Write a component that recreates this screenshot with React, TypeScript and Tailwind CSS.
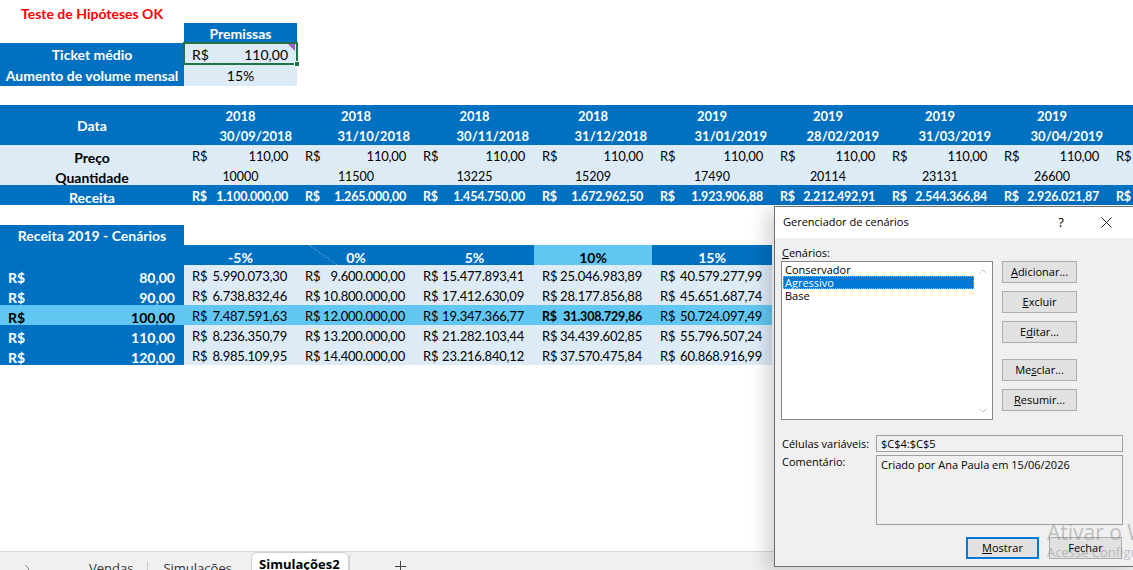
import React from "react";

const COL_W = ["w-[113px]", "w-[118px]", "w-[119px]", "w-[118px]", "w-[120px]", "w-[112px]", "w-[112px]", "w-[112px]", "w-[112px]"];

const years = ["2018", "2018", "2018", "2018", "2019", "2019", "2019", "2019", "2019"];
const dates = ["30/09/2018", "31/10/2018", "30/11/2018", "31/12/2018", "31/01/2019", "28/02/2019", "31/03/2019", "30/04/2019", "31/05/2019"];
const qtd = ["10000", "11500", "13225", "15209", "17490", "20114", "23131", "26600", "30590"];
const receita = ["1.100.000,00", "1.265.000,00", "1.454.750,00", "1.672.962,50", "1.923.906,88", "2.212.492,91", "2.544.366,84", "2.926.021,87", "3.364.925,15"];

const headers = ["-5%", "0%", "5%", "10%", "15%"];
const cenarios = [
  { preco: "80,00", vals: ["5.990.073,30", "9.600.000,00", "15.477.893,41", "25.046.983,89", "40.579.277,99"] },
  { preco: "90,00", vals: ["6.738.832,46", "10.800.000,00", "17.412.630,09", "28.177.856,88", "45.651.687,74"] },
  { preco: "100,00", vals: ["7.487.591,63", "12.000.000,00", "19.347.366,77", "31.308.729,86", "50.724.097,49"], active: true },
  { preco: "110,00", vals: ["8.236.350,79", "13.200.000,00", "21.282.103,44", "34.439.602,85", "55.796.507,24"] },
  { preco: "120,00", vals: ["8.985.109,95", "14.400.000,00", "23.216.840,12", "37.570.475,84", "60.868.916,99"] },
];

// celula contabil: R$ a esquerda, valor a direita
function Money({ value, className = "" }: { value: string; className?: string }) {
  return (
    <div className={`flex h-full items-center justify-between pt-[4px] pl-[8px] pr-[9px] ${className}`}>
      <span>R$</span>
      <span>{value}</span>
    </div>
  );
}

function Btn({ children, w = "w-[75px]", focus = false }: { children: React.ReactNode; w?: string; focus?: boolean }) {
  return (
    <div
      className={`${w} h-[22px] flex items-center justify-center bg-[#e1e1e1] ${
        focus ? "border-2 border-[#0078d7]" : "border border-[#adadad]"
      }`}
    >
      {children}
    </div>
  );
}

function Sheet() {
  return (
    <div className="relative flex-1 overflow-hidden bg-white font-['Lato',sans-serif] text-[13px] text-black">
      {/* titulo */}
      <div className="h-[23px] pl-[21px] pt-[5px] leading-[17px] text-[14px] font-bold text-[#ff0000]">Teste de Hipóteses OK</div>

      {/* premissas */}
      <div className="flex h-[20px]">
        <div className="w-[184px] shrink-0" />
        <div className="w-[113px] shrink-0 bg-[#0070c0] text-white font-bold text-[14px] flex items-center justify-center">Premissas</div>
      </div>
      <div className="flex h-[21px]">
        <div className="w-[184px] shrink-0 bg-[#0070c0] text-white font-bold text-[14px] flex items-center justify-center pt-[1px]">Ticket médio</div>
        <div className="relative w-[113px] shrink-0 bg-[#ddebf7] text-[14px]">
          <div className="flex h-full items-center justify-between pt-[1px] pl-[8px] pr-[9px]">
            <span>R$</span>
            <span>110,00</span>
          </div>
          <div className="absolute -left-[1px] -top-[1px] -right-[1px] -bottom-[1px] border-2 border-[#217346]" />
          <div className="absolute right-[2px] top-[1px] w-0 h-0 border-l-[7px] border-l-transparent border-t-[7px] border-t-[#a259c9]" />
          <div className="absolute -right-[3px] -bottom-[3px] w-[6px] h-[6px] bg-[#217346] border border-white" />
        </div>
      </div>
      <div className="flex h-[22px]">
        <div className="w-[184px] shrink-0 bg-[#0070c0] text-white font-bold text-[14px] flex items-center justify-center">Aumento de volume mensal</div>
        <div className="w-[113px] shrink-0 bg-[#ddebf7] text-[14px] flex items-center justify-center">15%</div>
      </div>
      <div className="h-[19px]" />

      {/* tabela de datas */}
      <div className="flex h-[40px] bg-[#0070c0] text-white font-bold">
        <div className="w-[184px] shrink-0 flex items-center justify-center text-[14px]">Data</div>
        {years.map((y, i) => (
          <div key={i} className={`${COL_W[i]} shrink-0 flex flex-col`}>
            <div className="h-[20px] pt-[4px] flex items-center justify-center">{y}</div>
            <div className="h-[20px] pt-[4px] flex items-center justify-end pr-[5px]">{dates[i]}</div>
          </div>
        ))}
      </div>
      <div className="flex h-[20px] bg-[#ddebf7]">
        <div className="w-[184px] shrink-0 flex items-center justify-center pt-[4px] font-bold text-[14px]">Preço</div>
        {years.map((_, i) => (
          <div key={i} className={`${COL_W[i]} shrink-0 tracking-[-0.2px]`}>
            <Money value="110,00" />
          </div>
        ))}
      </div>
      <div className="flex h-[20px] bg-[#ddebf7]">
        <div className="w-[184px] shrink-0 flex items-center justify-center pt-[4px] font-bold text-[14px]">Quantidade</div>
        {qtd.map((q, i) => (
          <div key={i} className={`${COL_W[i]} shrink-0 flex items-center justify-center pt-[4px] text-[12.5px]`}>
            {q}
          </div>
        ))}
      </div>
      <div className="flex h-[20px] bg-[#0070c0] text-white font-bold">
        <div className="w-[184px] shrink-0 flex items-center justify-center pt-[4px] text-[14px]">Receita</div>
        {receita.map((r, i) => (
          <div key={i} className={`${COL_W[i]} shrink-0 text-[12.5px] tracking-[-0.2px]`}>
            <Money value={r} />
          </div>
        ))}
      </div>
      <div className="h-[20px]" />

      {/* cenarios */}
      <div className="flex h-[20px]">
        <div className="w-[184px] shrink-0 bg-[#0070c0] text-white font-bold text-[14px] flex items-center justify-center pt-[1px]">Receita 2019 - Cenários</div>
      </div>
      <div className="flex h-[20px] w-[772px] bg-[#0070c0] text-white font-bold text-[14px]">
        <div className="w-[184px] shrink-0" />
        {headers.map((h, i) => (
          <div
            key={i}
            className={`${COL_W[i]} relative shrink-0 flex items-center justify-center pt-[4px] ${i === 3 ? "bg-[#61c7f2] text-black" : ""}`}
          >
            {h}
            {i === 1 && (
              <svg className="absolute left-[12px] top-0" width="28" height="20" viewBox="0 0 28 20">
                <line x1="0" y1="0" x2="28" y2="20" stroke="#cfd8e6" strokeWidth="1" strokeDasharray="1 2" />
              </svg>
            )}
          </div>
        ))}
      </div>
      {cenarios.map((row, r) => (
        <div key={r} className={`flex h-[20px] w-[772px] ${row.active ? "bg-[#61c7f2]" : ""}`}>
          <div
            className={`w-[184px] shrink-0 font-bold text-[14px] ${
              row.active ? "text-black" : "bg-[#0070c0] text-white"
            }`}
          >
            <Money value={row.preco} className="pr-[8px]" />
          </div>
          {row.vals.map((v, i) => (
            <div
              key={i}
              className={`${COL_W[i]} shrink-0 tracking-[-0.2px] ${row.active ? "" : "bg-[#ddebf7]"} ${
                row.active && i === 3 ? "font-bold text-[12.5px]" : ""
              }`}
            >
              <Money value={v} className="pr-[10px]" />
            </div>
          ))}
        </div>
      ))}
    </div>
  );
}

function TabBar() {
  return (
    <div className="h-[19px] shrink-0 flex bg-[#f0f0f0] border-t border-[#d6d6d6] font-['Open_Sans',sans-serif] text-[13px] text-[#333] overflow-hidden">
      <div className="w-[247px] shrink-0 flex pt-[7px] leading-[18px]">
        <svg className="ml-[24px] mt-[5px]" width="6" height="10" viewBox="0 0 6 10">
          <path d="M1 1 L5 5 L1 9" fill="none" stroke="#8a8a8a" strokeWidth="1" />
        </svg>
        <span className="ml-[59px]">Vendas</span>
        <span className="ml-[14px] mt-[3px] w-px h-[14px] bg-[#c8c8c8]" />
        <span className="ml-[15px]">Simulações</span>
      </div>
      <div className="ml-[4px] w-[98px] shrink-0 bg-white border border-b-0 border-[#d0d0d0] rounded-t-[6px] pt-[2px] pl-[7px] leading-[18px] font-bold text-black">
        Simulações2
      </div>
      <div className="flex-1 border-l border-[#d0d0d0] rounded-tl-[6px] pt-[9px]">
        <svg className="ml-[45px]" width="11" height="11" viewBox="0 0 11 11">
          <path d="M5.5 0 V11 M0 5.5 H11" stroke="#444" strokeWidth="1" />
        </svg>
      </div>
    </div>
  );
}

function Dialog() {
  return (
    <div className="absolute left-[774px] top-[206px] w-[362px] h-[361px] border border-[#6f6f6f] bg-[#f0f0f0] shadow-[-8px_4px_16px_rgba(0,0,0,0.16)] font-['Open_Sans',sans-serif] text-[11px] text-black">
      <div className="h-[31px] bg-white flex items-center pl-[8px]">
        <span className="w-[269px]">Gerenciador de cenários</span>
        <span className="w-[18px] text-center text-[13px]">?</span>
        <svg className="ml-[31px]" width="11" height="11" viewBox="0 0 11 11">
          <path d="M0.5 0.5 L10.5 10.5 M10.5 0.5 L0.5 10.5" stroke="#222" strokeWidth="1" />
        </svg>
      </div>
      <div className="px-[6px] pt-[7px]">
        <div className="h-[16px] leading-[16px] pl-[1px]">
          <span className="underline">C</span>enários:
        </div>
        <div className="flex">
          <div className="relative w-[212px] h-[159px] bg-white border border-[#828790] leading-[13px]">
            <div className="pt-[1px] pr-[17px]">
              <div className="px-[3px]">Conservador</div>
              <div className="mx-[1px] px-[2px] bg-[#0078d7] text-white outline-1 outline-dotted outline-[#f6a25a] -outline-offset-1">Agressivo</div>
              <div className="px-[3px]">Base</div>
            </div>
            <svg className="absolute right-[5px] top-[7px]" width="8" height="5" viewBox="0 0 8 5">
              <path d="M0.5 4.5 L4 1 L7.5 4.5" fill="none" stroke="#c2c2c2" strokeWidth="1" />
            </svg>
            <svg className="absolute right-[5px] bottom-[6px]" width="8" height="5" viewBox="0 0 8 5">
              <path d="M0.5 0.5 L4 4 L7.5 0.5" fill="none" stroke="#c2c2c2" strokeWidth="1" />
            </svg>
          </div>
          <div className="ml-[9px] flex flex-col">
            <Btn><span><span className="underline">A</span>dicionar...</span></Btn>
            <div className="h-[8px]" />
            <Btn><span><span className="underline">E</span>xcluir</span></Btn>
            <div className="h-[8px]" />
            <Btn><span>E<span className="underline">d</span>itar...</span></Btn>
            <div className="h-[16px]" />
            <Btn><span>Me<span className="underline">s</span>clar...</span></Btn>
            <div className="h-[8px]" />
            <Btn><span><span className="underline">R</span>esumir...</span></Btn>
          </div>
        </div>
        <div className="flex mt-[15px]">
          <div className="w-[95px] pl-[1px] h-[17px] leading-[17px]">Células variáveis:</div>
          <div className="w-[247px] h-[17px] border border-[#a0a0a0] pl-[4px] leading-[15px]">$C$4:$C$5</div>
        </div>
        <div className="flex mt-[3px]">
          <div className="w-[95px] pl-[1px] leading-[14px]">Comentário:</div>
          <div className="w-[247px] h-[70px] border border-[#a0a0a0] pl-[4px] pt-[2px] leading-[14px]">
            Criado por Ana Paula em 15/06/2026
          </div>
        </div>
        <div className="flex mt-[12px]">
          <div className="ml-[185px]">
            <Btn w="w-[73px]" focus>
              <span><span className="underline">M</span>ostrar</span>
            </Btn>
          </div>
          <div className="ml-[10px]">
            <Btn w="w-[73px]">Fechar</Btn>
          </div>
        </div>
      </div>
    </div>
  );
}

export default function App() {
  return (
    <div className="relative w-[1133px] h-[570px] overflow-hidden flex flex-col bg-white">
      <Sheet />
      <TabBar />
      <Dialog />
      <div className="absolute left-[1047px] top-[519px] whitespace-nowrap font-['Open_Sans',sans-serif] text-[rgba(110,110,110,0.4)] pointer-events-none">
        <div className="text-[21px] leading-[26px]">Ativar o Windows</div>
        <div className="text-[13px] leading-[16px] -mt-[1px]">Acesse Configurações para ativar o Windows.</div>
      </div>
    </div>
  );
}
